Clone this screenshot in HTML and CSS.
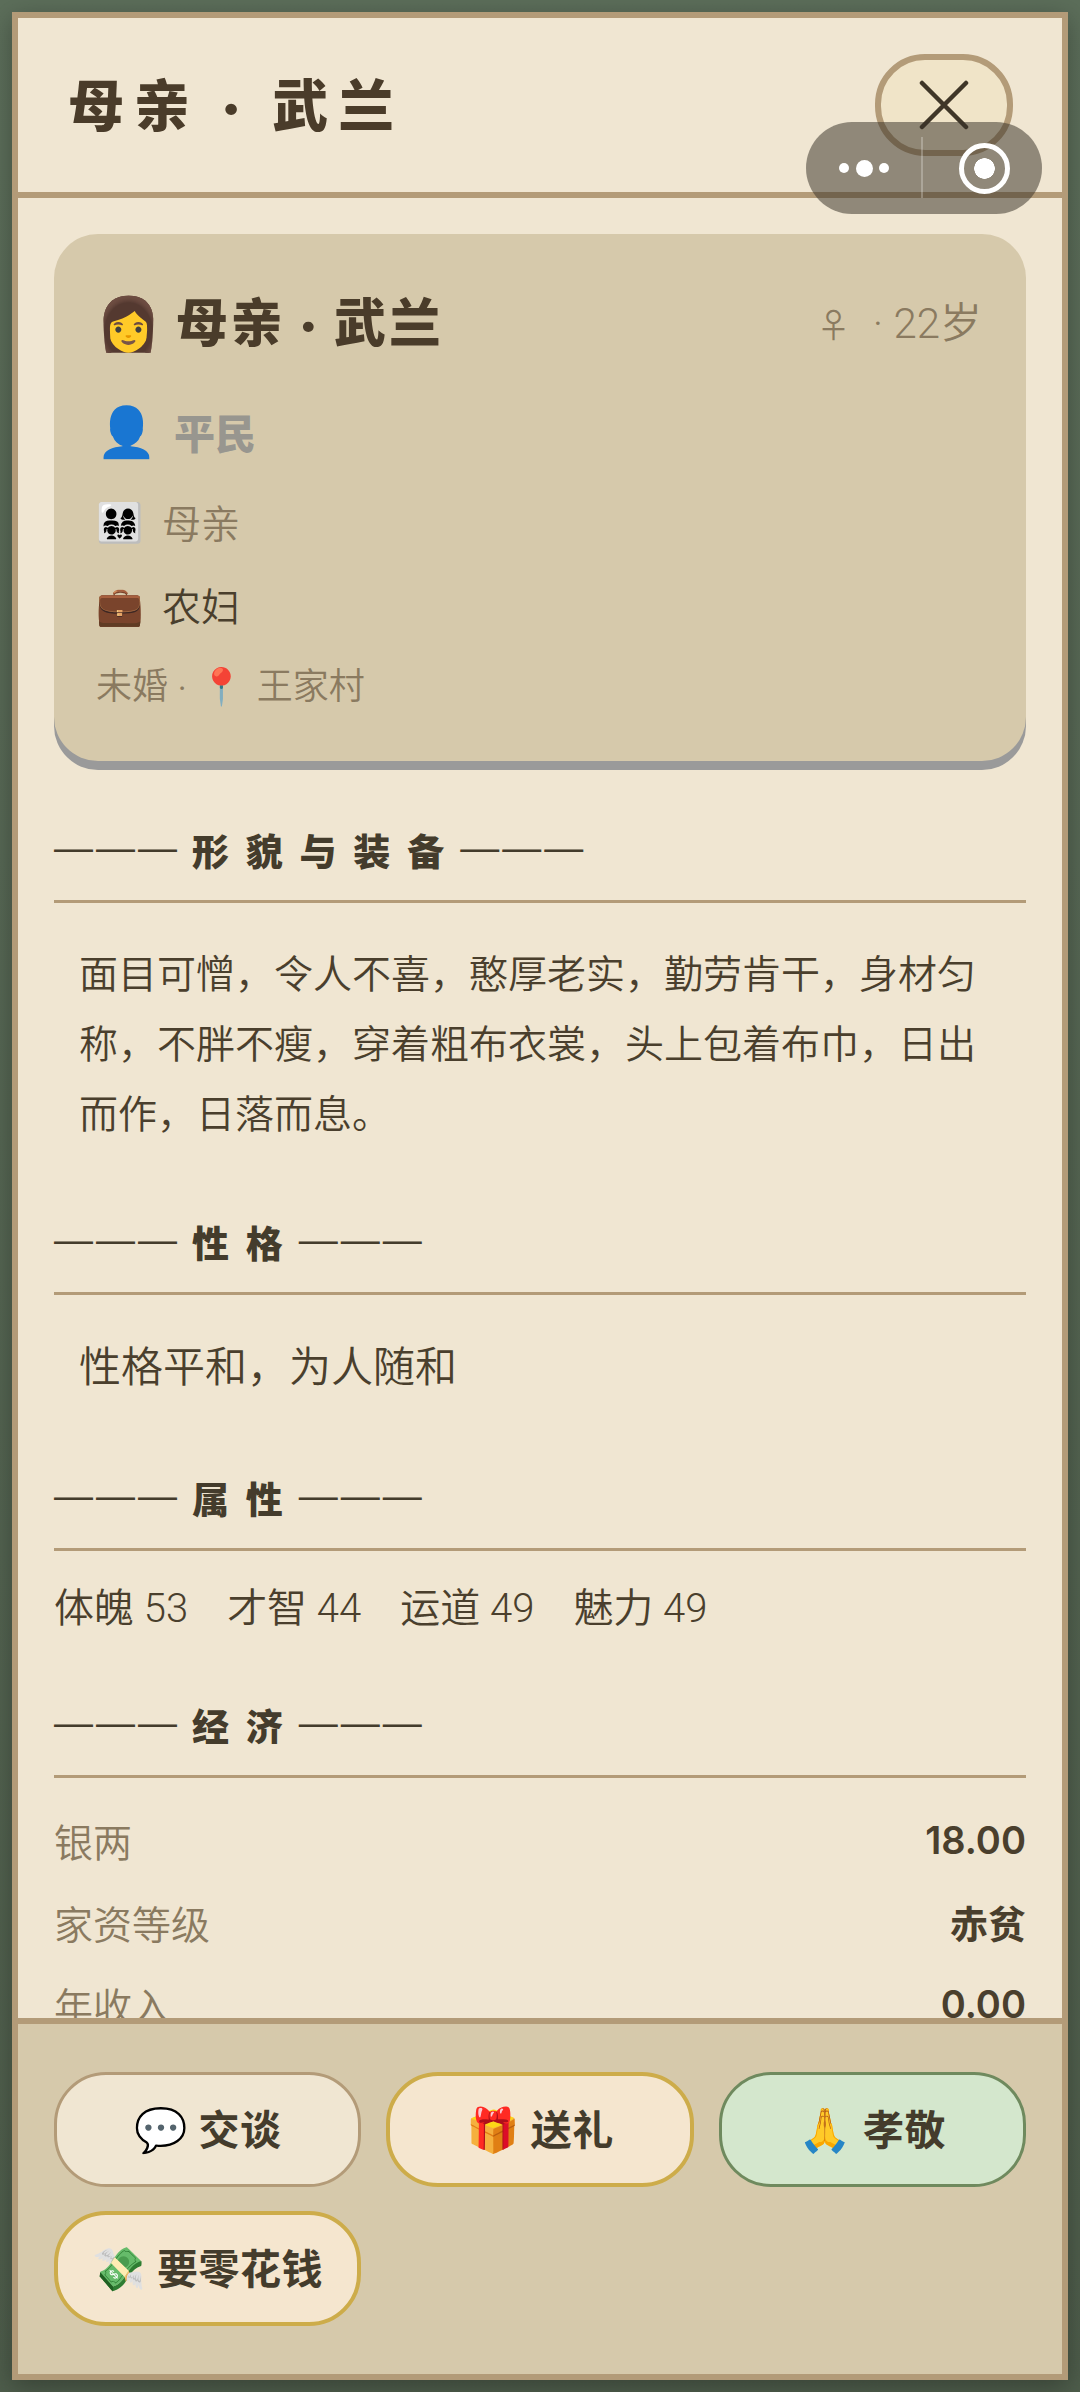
FILE: index.html
```html
<!DOCTYPE html>
<html lang="zh-CN">
<head>
    <meta charset="UTF-8">
    <title>母亲 · 武兰</title>
    <link rel="stylesheet" href="styles.css">
</head>
<body>
    <div class="modal">
        <header class="modal-header">
            <h1>母亲 · 武兰</h1>
            <button class="close-button">
                <svg width="50" height="50" viewBox="0 0 50 50"><path d="M3 3L47 47M47 3L3 47" stroke="#3f3628" stroke-width="4.5" stroke-linecap="round"/></svg>
            </button>
        </header>

        <div class="modal-body">
            <div class="profile-card">
                <div class="profile-top">
                    <div class="profile-name"><span class="emoji name-icon">👩</span>母亲 · 武兰</div>
                    <div class="profile-age"><span class="gender">♀</span> · 22岁</div>
                </div>
                <div class="profile-rank"><span class="emoji rank-icon">👤</span>平民</div>
                <div class="profile-row muted"><span class="emoji row-icon">👨‍👩‍👧‍👧</span>母亲</div>
                <div class="profile-row"><span class="emoji row-icon">💼</span>农妇</div>
                <div class="profile-foot">未婚 · <span class="emoji pin-icon">📍</span> 王家村</div>
            </div>

            <h2 class="section-title"><span class="dashes">———</span><span>形 貌 与 装 备</span><span class="dashes">———</span></h2>
            <p class="section-text looks">面目可憎，令人不喜，憨厚老实，勤劳肯干，身材匀称，不胖不瘦，穿着粗布衣裳，头上包着布巾，日出而作，日落而息。</p>

            <h2 class="section-title"><span class="dashes">———</span><span>性 格</span><span class="dashes">———</span></h2>
            <p class="section-text">性格平和，为人随和</p>

            <h2 class="section-title"><span class="dashes">———</span><span>属 性</span><span class="dashes">———</span></h2>
            <div class="attr-list">
                <span>体魄 53</span>
                <span>才智 44</span>
                <span>运道 49</span>
                <span>魅力 49</span>
            </div>

            <h2 class="section-title money-title"><span class="dashes">———</span><span>经 济</span><span class="dashes">———</span></h2>
            <div class="money-list">
                <div class="money-row"><span>银两</span><b>18.00</b></div>
                <div class="money-row"><span>家资等级</span><b>赤贫</b></div>
                <div class="money-row"><span>年收入</span><b>0.00</b></div>
            </div>
        </div>

        <footer class="modal-footer">
            <button class="action-button"><span class="emoji">💬</span> 交谈</button>
            <button class="action-button gold"><span class="emoji">🎁</span> 送礼</button>
            <button class="action-button green"><span class="emoji">🙏</span> 孝敬</button>
            <button class="action-button gold"><span class="emoji">💸</span> 要零花钱</button>
        </footer>
    </div>

    <!-- 小程序胶囊 -->
    <div class="capsule">
        <div class="capsule-dots"><i></i><i class="big"></i><i></i></div>
        <div class="capsule-target"><i></i></div>
    </div>
</body>
</html>
```

FILE: styles.css
```css
* {
    box-sizing: border-box;
}

body {
    margin: 0;
    height: 2392px;
    padding: 12px 12px 12px;
    overflow: hidden;
    position: relative;
    background: linear-gradient(#5c6e5a, #4e5d4b);
    font-family: Lato, "Noto Sans CJK SC", "Noto Color Emoji", sans-serif;
    color: #4a3f2d;
}

.modal {
    height: 100%;
    display: flex;
    flex-direction: column;
    border: 6px solid #b39b78;
    background-color: #f0e6d2;
    box-shadow: 0 6px 24px rgba(0, 0, 0, 0.3);
}

.modal-header {
    height: 180px;
    flex-shrink: 0;
    display: flex;
    align-items: flex-start;
    justify-content: space-between;
    padding: 36px 49px 0 50px;
    border-bottom: 6px solid #b39b78;
}

.modal-header h1 {
    margin: 11px 0 0;
    font-size: 56px;
    line-height: 80px;
    letter-spacing: 10px;
    font-weight: 900;
    color: #4a3c2a;
}

.close-button {
    width: 138px;
    height: 102px;
    padding: 0;
    border: 6px solid #b39b78;
    border-radius: 50px;
    background-color: #f0e4c8;
    display: flex;
    align-items: center;
    justify-content: center;
}

.modal-body {
    flex: 1;
    min-height: 0;
    overflow: hidden;
    padding: 36px 36px 0;
}

.profile-card {
    height: 527px;
    padding: 47px 44px 0 42px;
    border-radius: 44px;
    background-color: #d6c9ab;
    box-shadow: 0 9px 0 #9a9a9a;
}

.profile-top {
    display: flex;
    justify-content: space-between;
    align-items: center;
    height: 76px;
}

.profile-name {
    display: flex;
    align-items: center;
    font-size: 52px;
    font-weight: 900;
    letter-spacing: 3px;
    color: #4a3c2a;
}

.name-icon {
    margin: 8px 15px 0 0;
    letter-spacing: 0;
}

.profile-age {
    font-family: Roboto, "Noto Sans CJK SC", sans-serif;
    font-size: 42px;
    color: #8a7a60;
    font-weight: 350;
}

.gender {
    font-size: 34px;
    margin-right: 12px;
}

.profile-rank {
    display: flex;
    align-items: center;
    margin-top: 36px;
    height: 76px;
    font-size: 41px;
    font-weight: 900;
    color: #98968f;
}

.rank-icon {
    font-size: 49px;
    width: 78px;
}

.profile-row {
    display: flex;
    align-items: center;
    margin-top: 15px;
    height: 68px;
    font-size: 39px;
    font-weight: 350;
    color: #4a3f2d;
}

.profile-row.muted {
    margin-top: 18px;
    color: #8a7a60;
}

.row-icon {
    font-size: 38px;
    width: 66px;
}

.profile-foot {
    margin-top: 16px;
    font-size: 36px;
    line-height: 62px;
    font-weight: 350;
    color: #8a7a60;
}

.pin-icon {
    margin: 0 3px;
}

.section-title {
    display: flex;
    gap: 12px;
    margin: 66px 0 0;
    height: 81px;
    padding-bottom: 18px;
    line-height: 60px;
    font-size: 37px;
    letter-spacing: 4px;
    font-weight: 900;
    color: #443c2c;
    border-bottom: 3px solid #b39b78;
}

.profile-card + .section-title {
    margin-top: 61px;
}

.section-title.money-title {
    margin-top: 53px;
}

.dashes {
    font-family: "Liberation Sans", sans-serif;
    font-size: 39px;
    font-weight: 400;
    line-height: 52px;
    letter-spacing: 3px;
}

.section-text {
    margin: 0;
    padding: 35px 25px 0;
    font-size: 42px;
    line-height: 73.5px;
    font-weight: 350;
    color: #4a3f2d;
}

.section-text.looks {
    margin-bottom: 1px;
    font-size: 39px;
    line-height: 70px;
}

.attr-list {
    display: flex;
    gap: 39px;
    padding-top: 23px;
    font-family: Roboto, "Noto Sans CJK SC", sans-serif;
    font-size: 40px;
    line-height: 70px;
    font-weight: 350;
}

.money-list {
    padding-top: 21px;
}

.money-row {
    display: flex;
    justify-content: space-between;
    align-items: center;
    height: 82px;
    font-size: 39px;
    font-weight: 350;
    color: #8a7a60;
}

.money-row b {
    font-family: Inter, "Noto Sans CJK SC", sans-serif;
    font-size: 38px;
    font-weight: 600;
    color: #4a3f2d;
}

.modal-footer {
    flex-shrink: 0;
    display: grid;
    grid-template-columns: repeat(3, 1fr);
    gap: 24px 25px;
    padding: 48px 36px;
    border-top: 6px solid #b39b78;
    background-color: #d6c9ab;
}

.action-button {
    height: 115px;
    padding: 0 0 6px;
    border: 3px solid #b39b78;
    border-radius: 52px;
    background-color: #f0e6d2;
    font-family: inherit;
    font-size: 41px;
    font-weight: 700;
    letter-spacing: 0.5px;
    color: #443c2c;
}

.action-button .emoji {
    font-size: 43px;
}

.action-button.gold {
    border: 4px solid #cdac4a;
    background-color: #f5e6cf;
}

.action-button.green {
    border-color: #6f8a5e;
    background-color: #d4e7cd;
}

.capsule {
    position: absolute;
    left: 806px;
    top: 122px;
    width: 236px;
    height: 92px;
    display: flex;
    border-radius: 46px;
    background-color: rgba(55, 50, 40, 0.52);
}

.capsule-dots {
    width: 117px;
    display: flex;
    align-items: center;
    justify-content: flex-end;
    gap: 6.5px;
    padding-right: 34px;
    position: relative;
}

.capsule-dots::after {
    content: "";
    position: absolute;
    right: 0;
    top: 15px;
    height: 61px;
    width: 2px;
    background-color: rgba(255, 255, 255, 0.25);
}

.capsule-dots i {
    width: 10px;
    height: 10px;
    border-radius: 50%;
    background-color: #fff;
}

.capsule-dots i.big {
    width: 17px;
    height: 17px;
}

.capsule-target {
    flex: 1;
    display: flex;
    align-items: center;
    justify-content: center;
    padding-left: 3px;
}

.capsule-target i {
    width: 51px;
    height: 51px;
    border: 5px solid #fff;
    border-radius: 50%;
    background: radial-gradient(circle, #fff 10px, transparent 10.5px);
}
```
